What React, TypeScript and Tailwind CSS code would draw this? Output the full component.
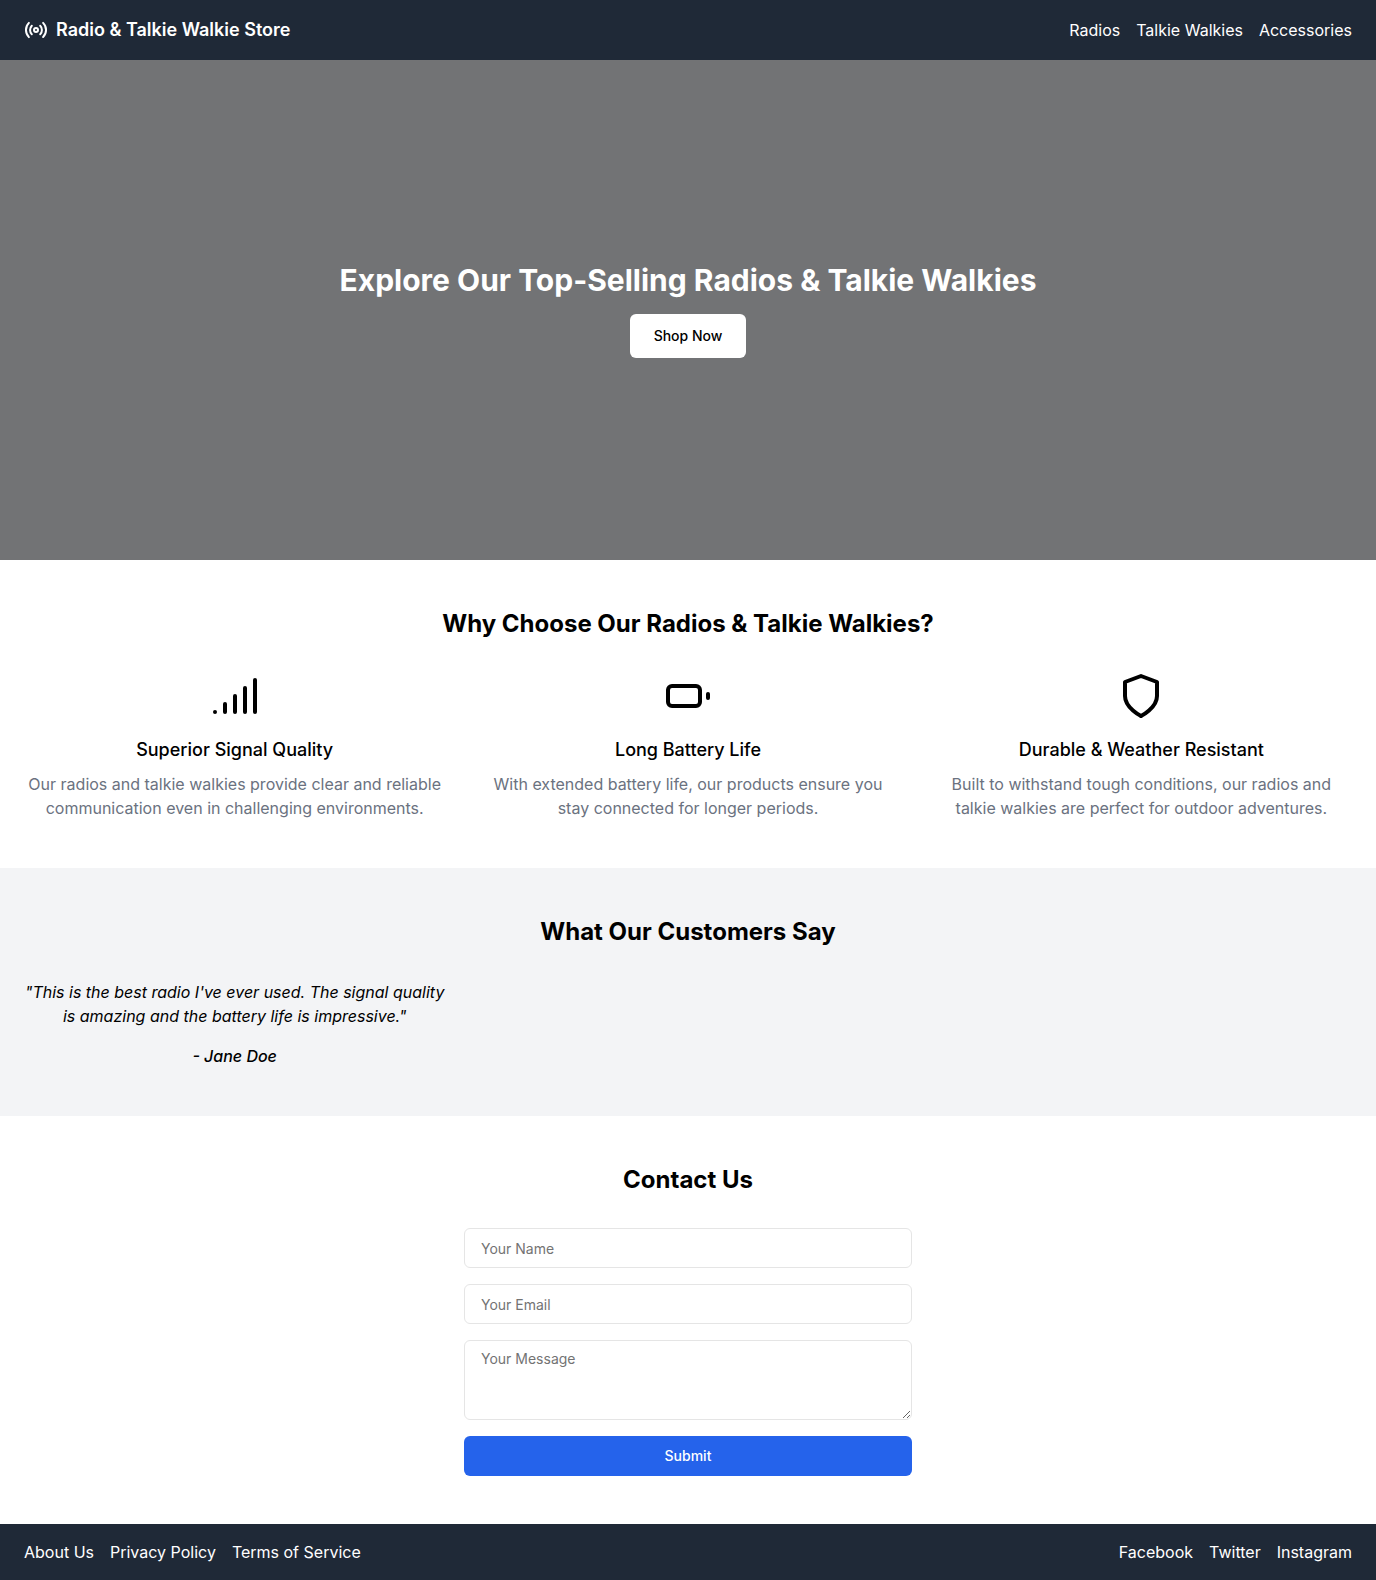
import type { ReactNode } from "react";

function Icon({ className, children }: { className: string; children: ReactNode }) {
  return (
    <svg
      viewBox="0 0 24 24"
      fill="none"
      stroke="currentColor"
      strokeWidth="2"
      strokeLinecap="round"
      strokeLinejoin="round"
      aria-hidden="true"
      className={className}
    >
      {children}
    </svg>
  );
}

const features: { icon: ReactNode; title: string; text: string }[] = [
  {
    icon: (
      <>
        <path d="M2 20h.01" />
        <path d="M7 20v-4" />
        <path d="M12 20v-8" />
        <path d="M17 20V8" />
        <path d="M22 4v16" />
      </>
    ),
    title: "Superior Signal Quality",
    text: "Our radios and talkie walkies provide clear and reliable communication even in challenging environments.",
  },
  {
    icon: (
      <>
        <rect width="16" height="10" x="2" y="7" rx="2" ry="2" />
        <path d="M22 11v2" />
      </>
    ),
    title: "Long Battery Life",
    text: "With extended battery life, our products ensure you stay connected for longer periods.",
  },
  {
    icon: <path d="M12 22s8-4 8-10V5l-8-3-8 3v7c0 6 8 10 8 10" />,
    title: "Durable & Weather Resistant",
    text: "Built to withstand tough conditions, our radios and talkie walkies are perfect for outdoor adventures.",
  },
];

function NavLinks({ label, items }: { label: string; items: string[] }) {
  return (
    <nav aria-label={label} className="flex gap-4">
      {items.map((item) => (
        <a key={item} href="#" className="hover:underline">
          {item}
        </a>
      ))}
    </nav>
  );
}

const field =
  "block w-full rounded-md border border-[#e5e5e5] bg-white px-4 py-2 text-sm placeholder:text-[#737373]";

export default function App() {
  return (
    <div className="flex min-h-screen flex-col bg-white font-['Inter',sans-serif] text-base text-black">
      <header className="flex items-center justify-between bg-[#1f2937] px-6 py-4 text-white">
        <a href="#" className="flex items-center gap-2">
          <Icon className="size-6">
            <path d="M4.9 19.1C1 15.2 1 8.8 4.9 4.9" />
            <path d="M7.8 16.2c-2.3-2.3-2.3-6.1 0-8.5" />
            <circle cx="12" cy="12" r="2" />
            <path d="M16.2 7.8c2.3 2.3 2.3 6.1 0 8.5" />
            <path d="M19.1 4.9C23 8.8 23 15.1 19.1 19" />
          </Icon>
          <span className="text-lg font-semibold">Radio &amp; Talkie Walkie Store</span>
        </a>
        <NavLinks label="Products" items={["Radios", "Talkie Walkies", "Accessories"]} />
      </header>
      <main className="flex-1">
        <section className="flex h-[500px] flex-col items-center justify-center gap-4 bg-[#727375]">
          <h1 className="text-3xl font-bold text-white">
            Explore Our Top-Selling Radios &amp; Talkie Walkies
          </h1>
          <button className="h-11 rounded-md bg-white px-6 text-sm font-medium">Shop Now</button>
        </section>
        <section className="px-6 py-12">
          <h2 className="mb-8 text-center text-2xl font-bold">
            Why Choose Our Radios &amp; Talkie Walkies?
          </h2>
          <div className="grid grid-cols-3 gap-8">
            {features.map(({ icon, title, text }) => (
              <div key={title} className="flex flex-col items-center text-center">
                <Icon className="mb-4 size-12">{icon}</Icon>
                <h3 className="mb-2 text-lg font-medium">{title}</h3>
                <p className="text-[#6b7280]">{text}</p>
              </div>
            ))}
          </div>
        </section>
        <section className="bg-[#f3f4f6] px-6 py-12">
          <h2 className="mb-8 text-center text-2xl font-bold">What Our Customers Say</h2>
          <div className="grid grid-cols-3 gap-8">
            <blockquote className="text-center italic">
              <p className="mb-4">
                "This is the best radio I've ever used. The signal quality is amazing and the
                battery life is impressive."
              </p>
              <cite className="block font-medium">- Jane Doe</cite>
            </blockquote>
          </div>
        </section>
        <section className="px-6 py-12">
          <h2 className="mb-8 text-center text-2xl font-bold">Contact Us</h2>
          <form className="mx-auto flex max-w-md flex-col gap-4">
            <input aria-label="Your Name" placeholder="Your Name" type="text" className={`${field} h-10`} />
            <input aria-label="Your Email" placeholder="Your Email" type="email" className={`${field} h-10`} />
            <textarea aria-label="Your Message" placeholder="Your Message" className={`${field} h-20`} />
            <button type="submit" className="h-10 rounded-md bg-[#2563eb] text-sm font-medium text-white">
              Submit
            </button>
          </form>
        </section>
      </main>
      <footer className="flex items-center justify-between bg-[#1f2937] px-6 py-4 text-white">
        <NavLinks label="Company" items={["About Us", "Privacy Policy", "Terms of Service"]} />
        <NavLinks label="Social" items={["Facebook", "Twitter", "Instagram"]} />
      </footer>
    </div>
  );
}
